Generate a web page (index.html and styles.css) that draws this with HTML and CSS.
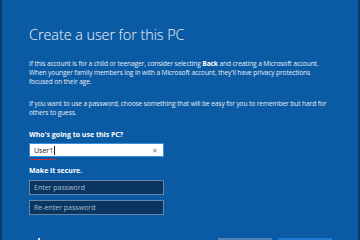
FILE: index.html
```html
<!DOCTYPE html>
<html lang="en">
<head>
    <meta charset="UTF-8">
    <meta name="viewport" content="width=device-width, initial-scale=1.0">
    <title>Create a user for this PC</title>
    <link rel="stylesheet" href="styles.css">
</head>
<body>
    <div class="frame">
        <div class="content">
            <h1>Create a user for this PC</h1>
            <p class="info">If this account is for a child or teenager, consider selecting <b>Back</b> and creating a Microsoft account.<br>When younger family members log in with a Microsoft account, they'll have privacy protections<br>focused on their age.</p>
            <p class="info">If you want to use a password, choose something that will be easy for you to remember but hard for<br>others to guess.</p>
            <div class="label">Who's going to use this PC?</div>
            <div class="field field-active">
                <span class="typed">User1</span><span class="caret"></span>
                <span class="clear">&#x2715;</span>
            </div>
            <div class="spell"></div>
            <div class="label label-secure">Make it secure.</div>
            <div class="field field-dark">Enter password</div>
            <div class="field field-dark">Re-enter password</div>
        </div>
        <div class="footer">
            <span class="ease-dot"></span>
            <div class="buttons">
                <button type="button" class="btn btn-back" aria-label="Back"></button>
                <button type="button" class="btn btn-next" aria-label="Next"></button>
            </div>
        </div>
    </div>
</body>
</html>
```

FILE: styles.css
```css
html, body {
    margin: 0;
    height: 100%;
    overflow: hidden;
}
body {
    background-color: #073b6c;
    font-family: "Open Sans", "Noto Sans", sans-serif;
    color: #e6eef7;
}
.frame {
    height: 100%;
    margin: 0 2px;
    background-color: #0b5aa4;
    display: flex;
    flex-direction: column;
    overflow: hidden;
}
.content {
    padding: 25px 0 0 27px;
    flex: 1;
}
h1 {
    font-size: 14.5px;
    font-weight: 300;
    color: #f2f6fb;
    margin: 0 0 15px 0;
    letter-spacing: -0.1px;
}
.info {
    font-size: 6.6px;
    line-height: 9.2px;
    letter-spacing: -0.1px;
    white-space: nowrap;
    margin: 0 0 12px 0;
}
.info + .info {
    margin-bottom: 13px;
}
.info b {
    color: #fff;
}
.label {
    font-size: 7px;
    font-weight: bold;
    color: #fff;
    margin-bottom: 4px;
}
.label-secure {
    margin-top: 6px;
    margin-bottom: 5px;
}
.field {
    width: 129px;
    height: 12px;
    font-size: 7px;
    padding: 0 0 0 4px;
    display: flex;
    align-items: center;
    margin-bottom: 5px;
}
.field-active {
    background-color: #fff;
    border: 1px solid #3a8fe0;
    color: #222;
    margin-bottom: 0;
}
.caret {
    width: 1px;
    height: 9px;
    background-color: #222;
    margin-left: 1px;
}
.clear {
    margin-left: auto;
    margin-right: 5px;
    color: #888;
}
.spell {
    width: 26px;
    height: 1px;
    margin: 2px 0 0 1px;
    background-color: #c8283a;
}
.field-dark {
    background-color: #0a3560;
    border: 1px solid #6786a8;
    color: #a9bdd2;
    height: 13px;
}
.footer {
    height: 2px;
    display: flex;
    align-items: flex-start;
    padding: 0 26px 0 36px;
}
.ease-dot {
    width: 2px;
    height: 2px;
    background-color: #d7e3ef;
}
.buttons {
    margin-left: auto;
    display: flex;
    gap: 6px;
}
.btn {
    width: 54px;
    height: 20px;
    border: none;
    padding: 0;
}
.btn-back {
    background-color: #4c83b9;
}
.btn-next {
    background-color: #1f7ad4;
}
```
